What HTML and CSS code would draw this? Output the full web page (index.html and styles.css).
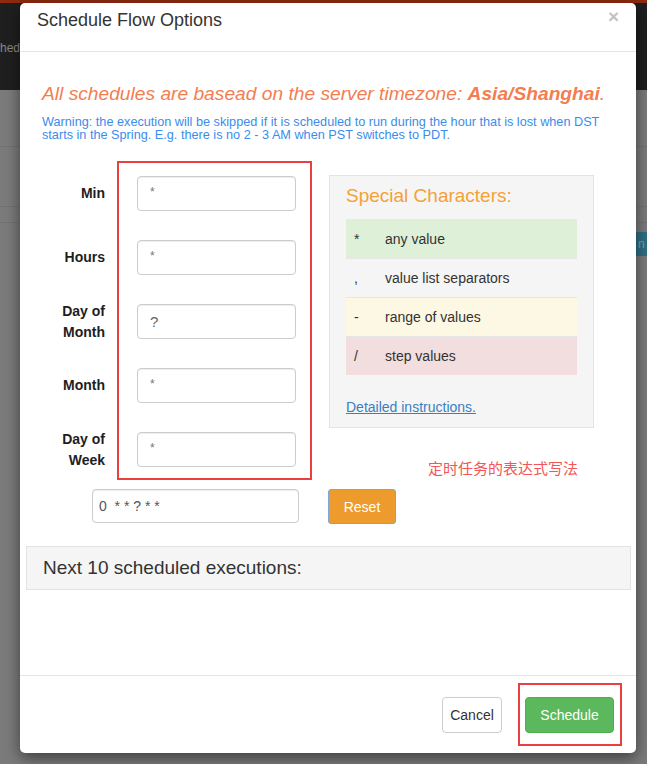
FILE: index.html
```html
<!DOCTYPE html>
<html lang="en">
<head>
<meta charset="utf-8">
<title>Schedule Flow Options</title>
<link rel="stylesheet" href="styles.css">
</head>
<body>
<div class="page">
  <div class="topline"></div>
  <div class="navbar"><span class="nav-text">hed</span></div>
  <div class="content">
    <div class="bg-row r1"></div>
    <div class="bg-row r2"></div>
    <div class="bg-row r3"></div>
    <div class="bg-tag">n</div>
  </div>
</div>

<div class="modal">
  <div class="modal-header">
    <h4 class="modal-title">Schedule Flow Options</h4>
    <span class="close">×</span>
  </div>
  <div class="modal-body">
    <p class="tz-title">All schedules are basead on the server timezone: <b>Asia/Shanghai</b>.</p>
    <p class="warning">Warning: the execution will be skipped if it is scheduled to run during the hour that is lost when DST starts in the Spring. E.g. there is no 2 - 3 AM when PST switches to PDT.</p>

    <div class="cron-area">
      <div class="fields">
        <div class="field"><label class="lbl">Min</label><div class="inp">*</div></div>
        <div class="field"><label class="lbl">Hours</label><div class="inp">*</div></div>
        <div class="field"><label class="lbl">Day of<br>Month</label><div class="inp q">?</div></div>
        <div class="field"><label class="lbl">Month</label><div class="inp">*</div></div>
        <div class="field"><label class="lbl">Day of<br>Week</label><div class="inp">*</div></div>
      </div>
      <div class="special">
        <div class="special-title">Special Characters:</div>
        <div class="sc-table">
          <div class="sc-row green"><span class="sc-ch">*</span><span class="sc-txt">any value</span></div>
          <div class="sc-row"><span class="sc-ch">,</span><span class="sc-txt">value list separators</span></div>
          <div class="sc-row yellow"><span class="sc-ch">-</span><span class="sc-txt">range of values</span></div>
          <div class="sc-row red"><span class="sc-ch">/</span><span class="sc-txt">step values</span></div>
        </div>
        <a class="detail-link">Detailed instructions.</a>
      </div>
    </div>

    <div class="cron-row">
      <div class="cron-input">0&nbsp; * * ? * *</div>
      <button class="btn-reset">Reset</button>
    </div>

    <div class="next-box">Next 10 scheduled executions:</div>
  </div>
  <div class="modal-footer">
    <button class="btn btn-cancel">Cancel</button>
    <button class="btn btn-schedule">Schedule</button>
  </div>

  <div class="mark mark-fields"></div>
  <div class="mark mark-schedule"></div>
  <div class="note">定时任务的表达式写法</div>
</div>
</body>
</html>
```

FILE: styles.css
```css
* { box-sizing: border-box; }
html, body { margin: 0; padding: 0; }
body {
  width: 647px;
  height: 764px;
  overflow: hidden;
  font-family: "Liberation Sans", Arial, sans-serif;
  position: relative;
  background: #7a7a7a;
}

.page { width: 647px; height: 764px; display: flex; flex-direction: column; }
.topline { height: 3px; background: #8e2a10; }
.navbar { height: 87px; background: #1f1f1f; position: relative; }
.nav-text { position: absolute; left: 0; top: 38px; font-size: 12px; color: #8a8a8a; }
.content { flex: 1; background: #7b7b7b; position: relative; }
.bg-row { height: 1px; background: #727272; margin-top: 0; }
.r1 { margin-top: 56px; }
.r2 { margin-top: 59px; }
.r3 { margin-top: 15px; }
.bg-tag {
  position: absolute; right: 0; top: 142px;
  width: 11px; height: 24px; background: #2f6f84;
  color: #6fa3b3; font-size: 12px; line-height: 24px; overflow: hidden;
  padding-left: 2px;
}

.modal {
  position: absolute;
  left: 20px; top: 3px;
  width: 616px; height: 750px;
  background: #fff;
  border-radius: 5px;
  box-shadow: 0 5px 15px rgba(0,0,0,.5);
  display: flex; flex-direction: column;
}

.modal-header {
  height: 49px;
  border-bottom: 1px solid #e5e5e5;
  display: flex; justify-content: space-between; align-items: flex-start;
  padding: 0 17px;
}
.modal-title {
  margin: 0; font-size: 18px; font-weight: normal; color: #333;
  line-height: 34px;
}
.close {
  font-size: 19px; font-weight: bold; color: #c2c2c2;
  line-height: 28px; margin-top: 0;
}

.modal-body { flex: 1; padding: 0 22px; }
.tz-title {
  margin: 30px 0 0; font-size: 19.2px; font-style: italic; color: #f47d4f;
  line-height: 24px; white-space: nowrap;
}
.tz-title b { font-weight: bold; }
.warning {
  margin: 10px 0 0; font-size: 12.7px; line-height: 13px; color: #3b8cec;
  width: 566px;
}

.cron-area { display: flex; margin-top: 33px; }
.fields {
  display: flex; flex-direction: column; gap: 29px;
  padding-top: 1px; width: 287px;
}
.field { display: flex; align-items: center; height: 35px; }
.lbl {
  width: 63px; text-align: right; font-weight: bold; font-size: 14px;
  color: #1e1e1e; line-height: 21px;
}
.inp {
  margin-left: 32px; width: 159px; height: 35px;
  border: 1px solid #ccc; border-radius: 4px;
  box-shadow: inset 0 1px 1px rgba(0,0,0,.075);
  padding: 5px 12px; font-size: 12px; color: #777; line-height: 20px;
}
.inp.q { font-size: 15px; color: #666; padding-top: 7px; }

.special {
  width: 265px; height: 253px;
  background: #f5f5f5; border: 1px solid #e3e3e3;
  padding: 8px 16px 0;
}
.special-title { font-size: 19px; color: #f4a136; line-height: 24px; margin-bottom: 11px; }
.sc-table { width: 231px; }
.sc-row { display: flex; height: 39px; align-items: center; font-size: 14px; color: #333; border-top: 1px solid #e6e6e6; }
.sc-row:first-child { border-top: 0; }
.sc-row.green { background: #dff0d8; }
.sc-row.yellow { background: #fcf8e3; }
.sc-row.red { background: #f2dede; }
.sc-ch { width: 39px; padding-left: 8px; }
.detail-link {
  display: block; margin-top: 22px; font-size: 14px; line-height: 20px;
  color: #3a7fc4; text-decoration: underline;
}

.cron-row { display: flex; align-items: flex-start; margin-top: 22px; padding-left: 50px; }
.cron-input {
  width: 207px; height: 34px; border: 1px solid #ccc; border-radius: 4px;
  padding: 0 6px; font-size: 14px; line-height: 32px; color: #555;
  box-shadow: inset 0 1px 1px rgba(0,0,0,.075);
}
.btn-reset {
  margin-left: 29px; width: 68px; height: 35px;
  background: #ec9b2c; border: 1px solid #7fa6d6; border-radius: 3px;
  color: #fff; font-family: inherit; font-size: 14px; padding: 0;
}

.next-box {
  margin: 22px -17px 0 -16px; height: 44px;
  background: #f5f5f5; border: 1px solid #e3e3e3;
  padding-left: 16px; font-size: 19px; line-height: 42px; color: #333;
}

.modal-footer {
  height: 78px; border-top: 1px solid #e5e5e5;
  display: flex; justify-content: flex-end; align-items: flex-start;
  padding: 21px 22px 0; gap: 23px;
}
.btn {
  height: 36px; border-radius: 4px; font-family: inherit; font-size: 14px; padding: 0;
}
.btn-cancel { width: 60px; background: #fff; border: 1px solid #ccc; color: #333; }
.btn-schedule { width: 89px; background: #5cb85c; border: 1px solid #4cae4c; color: #fff; }

.mark { position: absolute; border: 2px solid #e9403f; }
.mark-fields { left: 97px; top: 158px; width: 195px; height: 319px; }
.mark-schedule { left: 498px; top: 680px; width: 104px; height: 63px; }
.note {
  position: absolute; left: 408px; top: 455px;
  font-family: "Noto Sans CJK SC", sans-serif; font-size: 15px; color: #f25656;
  line-height: 20px;
}
```
